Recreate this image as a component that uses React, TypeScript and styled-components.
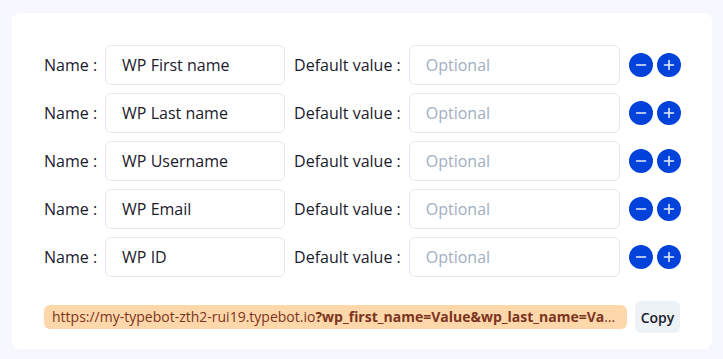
import React from "react";
import styled, { createGlobalStyle } from "styled-components";

const Global = createGlobalStyle`
  html, body { margin: 0; padding: 0; background: #f7f8ff; }
  body { font-family: "Open Sans", "Noto Sans", sans-serif; color: #1a202c; }
  * { box-sizing: border-box; }
`;

const Page = styled.div`
  padding: 13px 11px 11px 12px;
`;

const Card = styled.div`
  background: #ffffff;
  border-radius: 8px;
  padding: 32px 32px 16px 32px;
  display: flex;
  flex-direction: column;
  gap: 24px;
`;

const Rows = styled.div`
  display: flex;
  flex-direction: column;
  gap: 8px;
`;

const Row = styled.div`
  display: flex;
  align-items: center;
  height: 40px;
`;

const Label = styled.span`
  font-size: 16px;
  color: #1a202c;
  white-space: nowrap;
  margin-right: 8px;
`;

const Input = styled.input<{ $w: number }>`
  width: ${(p) => p.$w}px;
  height: 40px;
  border: 1px solid #e2e8f0;
  border-radius: 6px;
  padding: 0 16px;
  font-family: inherit;
  font-size: 16px;
  color: #1a202c;
  background: #fff;
  margin-right: 9px;
  outline: none;
  &::placeholder { color: #a0aec0; }
`;

const IconButtons = styled.div`
  display: flex;
  gap: 4px;
`;

const RoundButton = styled.button`
  width: 24px;
  height: 24px;
  border-radius: 50%;
  border: none;
  background: #0042da;
  padding: 0;
  display: flex;
  align-items: center;
  justify-content: center;
  cursor: pointer;
`;

const Footer = styled.div`
  display: flex;
  align-items: center;
  gap: 8px;
`;

const Url = styled.div`
  flex: 1;
  min-width: 0;
  height: 24px;
  line-height: 24px;
  background: #fed7aa;
  color: #7b341e;
  border-radius: 6px;
  padding: 0 8px;
  font-size: 14px;
  white-space: nowrap;
  overflow: hidden;
  text-overflow: ellipsis;
`;

const Copy = styled.button`
  flex: none;
  width: 45px;
  height: 32px;
  padding: 0;
  border: none;
  border-radius: 6px;
  background: #edf2f7;
  color: #1a202c;
  font-family: inherit;
  font-size: 14px;
  font-weight: 600;
  white-space: nowrap;
  cursor: pointer;
`;

const Minus = () => (
  <svg width="14" height="14" viewBox="0 0 14 14">
    <path d="M2.5 7h9" stroke="#e8eefc" strokeWidth="1.6" strokeLinecap="round" />
  </svg>
);
const Plus = () => (
  <svg width="14" height="14" viewBox="0 0 14 14">
    <path d="M2.5 7h9M7 2.5v9" stroke="#e8eefc" strokeWidth="1.6" strokeLinecap="round" />
  </svg>
);

const names = ["WP First name", "WP Last name", "WP Username", "WP Email", "WP ID"];

export default function App() {
  return (
    <>
      <Global />
      <Page>
        <Card>
          <Rows>
            {names.map((n) => (
              <Row key={n}>
                <Label>Name :</Label>
                <Input $w={180} defaultValue={n} />
                <Label>Default value :</Label>
                <Input $w={211} placeholder="Optional" />
                <IconButtons>
                  <RoundButton aria-label="remove"><Minus /></RoundButton>
                  <RoundButton aria-label="add"><Plus /></RoundButton>
                </IconButtons>
              </Row>
            ))}
          </Rows>
          <Footer>
            <Url>
              https://my-typebot-zth2-rui19.typebot.io
              <b>?wp_first_name=Value&amp;wp_last_name=Value&amp;wp_username=Value&amp;wp_email=Value&amp;wp_id=Value</b>
            </Url>
            <Copy>Copy</Copy>
          </Footer>
        </Card>
      </Page>
    </>
  );
}
